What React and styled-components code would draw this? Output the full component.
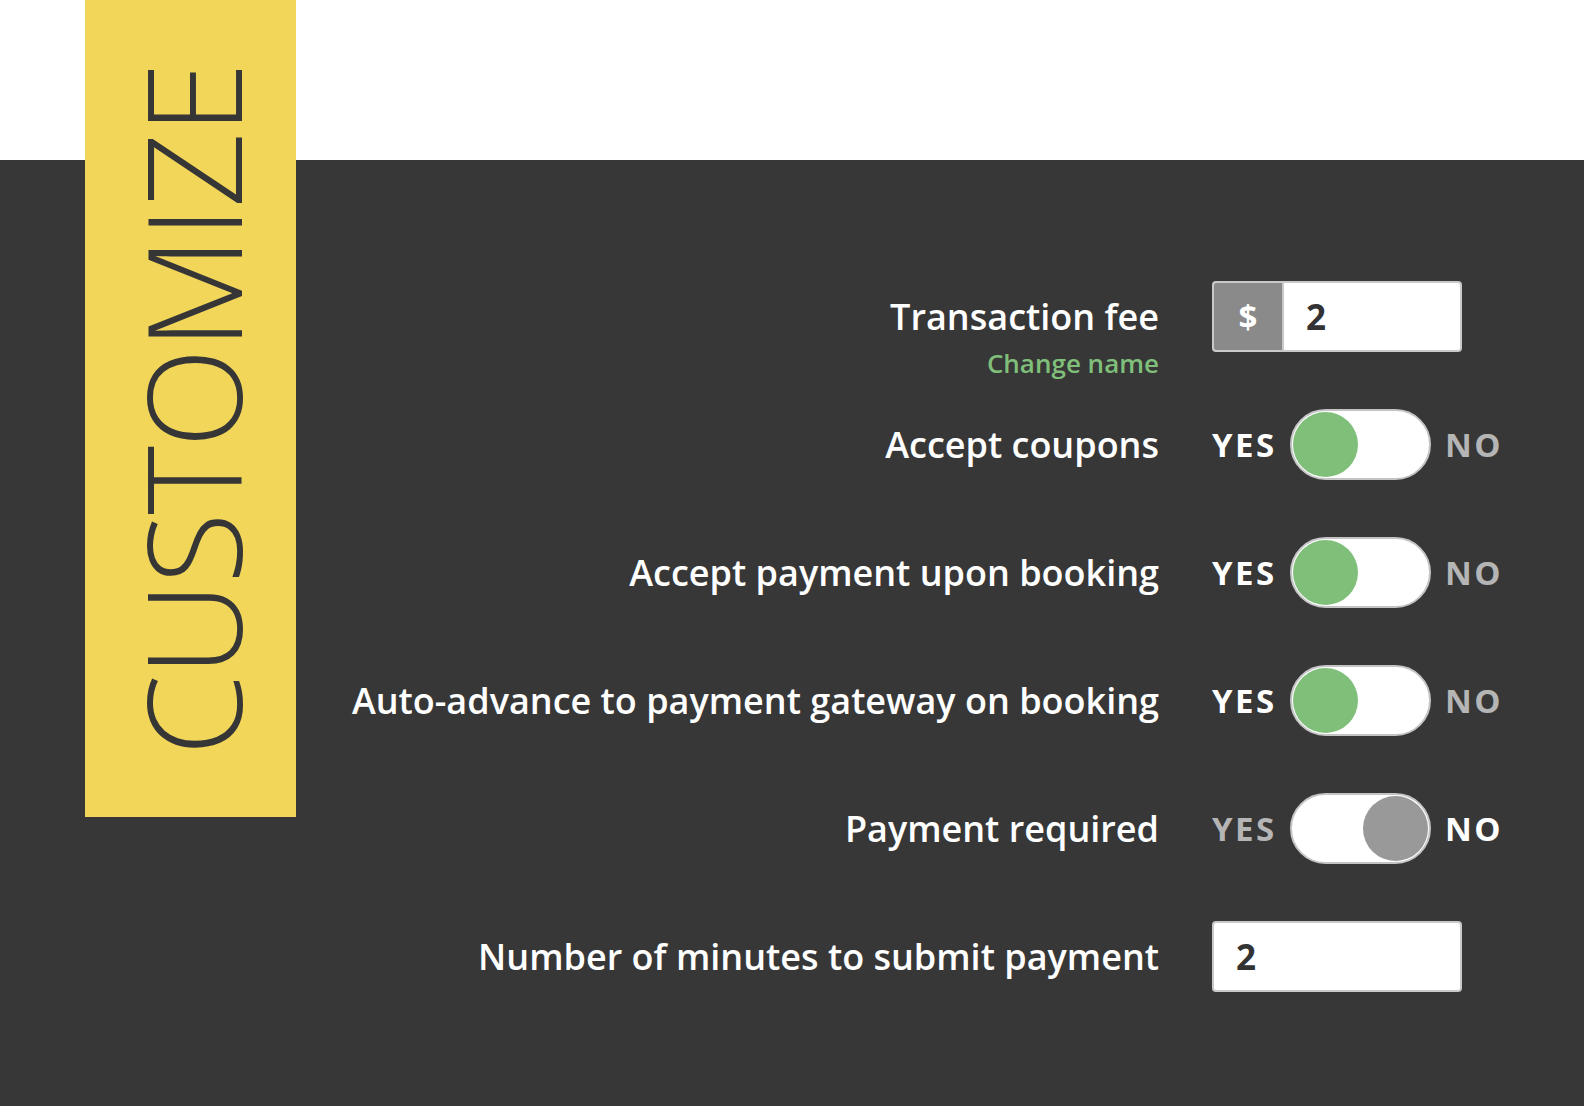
import React, { useState } from "react";
import styled, { createGlobalStyle } from "styled-components";

const GlobalStyle = createGlobalStyle`
  html, body {
    margin: 0;
    padding: 0;
    background: #373737;
    font-family: "Open Sans", "Liberation Sans", sans-serif;
  }
`;

const Page = styled.div`
  position: relative;
  width: 1584px;
  height: 1106px;
  display: flex;
  flex-direction: column;
  overflow: hidden;
`;

const TopBand = styled.div`
  height: 160px;
  background: #ffffff;
`;

const Body = styled.div`
  flex: 1;
  background: #373737;
  padding-top: 121px;
`;

const Banner = styled.div`
  position: absolute;
  top: 0;
  left: 85px;
  width: 211px;
  height: 817px;
  background: #f2d65a;
  display: flex;
  justify-content: center;
  align-items: flex-start;
  padding-top: 64px;
  padding-left: 2px;
  box-sizing: border-box;
`;

const BannerTitle = styled.h1`
  margin: 0;
  writing-mode: vertical-rl;
  transform: rotate(180deg);
  font-family: "Open Sans", "Liberation Sans", sans-serif;
  font-weight: 300;
  font-size: 131px;
  line-height: 1;
  letter-spacing: -2px;
  color: #363636;
`;

const Form = styled.div`
  display: grid;
  grid-template-columns: 1159px auto;
  grid-auto-rows: 71px;
  column-gap: 53px;
  row-gap: 57px;
`;

const LabelCell = styled.div`
  text-align: right;
  align-self: ${(p) => (p.$top ? "start" : "center")};
  color: #ffffff;
`;

const Label = styled.div`
  font-size: 36px;
  font-weight: 600;
  line-height: ${(p) => (p.$tall ? "71px" : "48px")};
  white-space: nowrap;
`;

const SubLabel = styled.div`
  font-size: 26px;
  font-weight: 600;
  line-height: 22px;
  color: #7fbf7a;
`;

const ControlCell = styled.div`
  display: flex;
  align-items: center;
  gap: 14px;
`;

const InputBox = styled.div`
  width: 250px;
  height: 71px;
  box-sizing: border-box;
  display: flex;
  background: #ffffff;
  border: 2px solid #c9c9c9;
  border-radius: 4px;
  overflow: hidden;
`;

const Prefix = styled.div`
  width: 68px;
  background: #8a8a8a;
  color: #ffffff;
  font-size: 33px;
  font-weight: 700;
  display: flex;
  align-items: center;
  justify-content: center;
  border-right: 2px solid #c9c9c9;
`;

const Value = styled.div`
  flex: 1;
  display: flex;
  align-items: center;
  padding-left: 22px;
  font-size: 35px;
  font-weight: 700;
  color: #333333;
`;

const Choice = styled.span`
  font-size: 33px;
  font-weight: 700;
  letter-spacing: 2.5px;
  color: ${(p) => (p.$active ? "#ffffff" : "#b5b5b5")};
  width: ${(p) => (p.$wide ? "64px" : "auto")};
`;

const Switch = styled.button`
  width: 141px;
  height: 71px;
  box-sizing: border-box;
  border: 2px solid #c4c4c4;
  border-radius: 36px;
  background: #ffffff;
  padding: 1px;
  display: flex;
  justify-content: ${(p) => (p.$on ? "flex-start" : "flex-end")};
  align-items: center;
  cursor: pointer;
`;

const Knob = styled.span`
  width: 65px;
  height: 65px;
  border-radius: 50%;
  background: ${(p) => (p.$on ? "#7fbf7a" : "#999999")};
`;

const Toggle = ({ on, onChange }) => (
  <ControlCell>
    <Choice $active={on} $wide>
      YES
    </Choice>
    <Switch $on={on} onClick={() => onChange(!on)}>
      <Knob $on={on} />
    </Switch>
    <Choice $active={!on}>NO</Choice>
  </ControlCell>
);

const App = () => {
  const [toggles, setToggles] = useState({
    coupons: true,
    upon: true,
    advance: true,
    required: false,
  });
  const set = (key) => (v) => setToggles({ ...toggles, [key]: v });

  return (
    <Page>
      <GlobalStyle />
      <TopBand />
      <Body>
        <Form>
          <LabelCell $top>
            <Label $tall>Transaction fee</Label>
            <SubLabel>Change name</SubLabel>
          </LabelCell>
          <ControlCell>
            <InputBox>
              <Prefix>$</Prefix>
              <Value>2</Value>
            </InputBox>
          </ControlCell>

          <LabelCell>
            <Label>Accept coupons</Label>
          </LabelCell>
          <Toggle on={toggles.coupons} onChange={set("coupons")} />

          <LabelCell>
            <Label>Accept payment upon booking</Label>
          </LabelCell>
          <Toggle on={toggles.upon} onChange={set("upon")} />

          <LabelCell>
            <Label>Auto-advance to payment gateway on booking</Label>
          </LabelCell>
          <Toggle on={toggles.advance} onChange={set("advance")} />

          <LabelCell>
            <Label>Payment required</Label>
          </LabelCell>
          <Toggle on={toggles.required} onChange={set("required")} />

          <LabelCell>
            <Label>Number of minutes to submit payment</Label>
          </LabelCell>
          <ControlCell>
            <InputBox>
              <Value>2</Value>
            </InputBox>
          </ControlCell>
        </Form>
      </Body>
      <Banner>
        <BannerTitle>CUSTOMIZE</BannerTitle>
      </Banner>
    </Page>
  );
};

export default App;
